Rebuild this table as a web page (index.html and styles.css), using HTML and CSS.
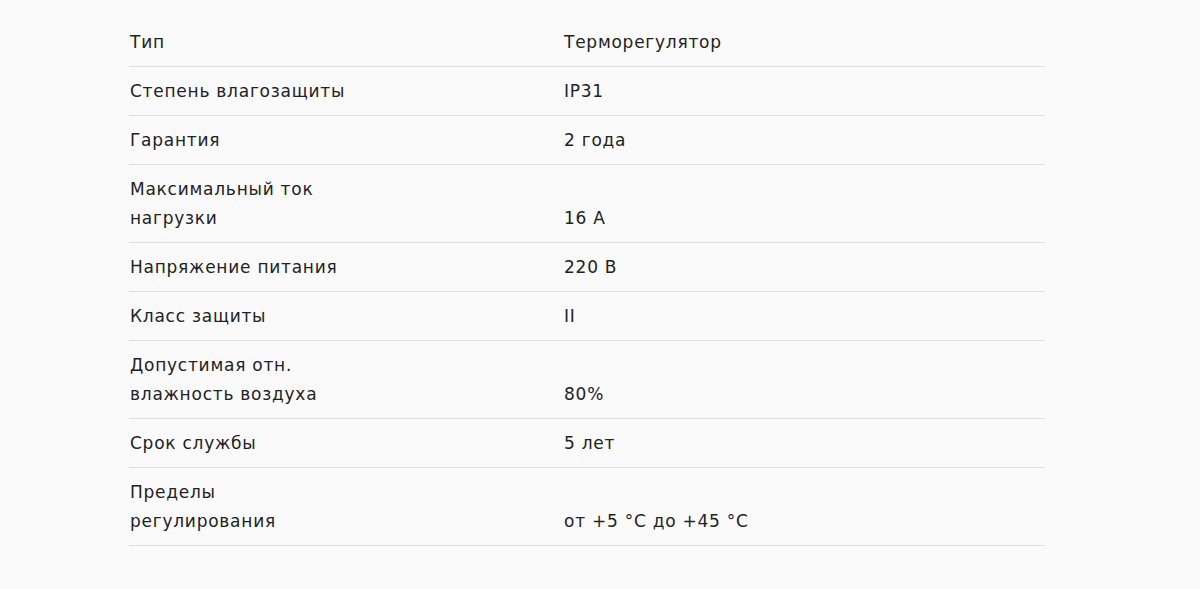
FILE: index.html
```html
<!DOCTYPE html>
<html lang="ru">
<head>
<meta charset="utf-8">
<link rel="stylesheet" href="styles.css">
</head>
<body>
<table class="specs">
  <tr class="row first"><td class="label"><span class="label-text">Тип</span></td><td class="value">Терморегулятор</td></tr>
  <tr class="row"><td class="label"><span class="label-text">Степень влагозащиты</span></td><td class="value">IP31</td></tr>
  <tr class="row"><td class="label"><span class="label-text">Гарантия</span></td><td class="value">2 года</td></tr>
  <tr class="row"><td class="label"><span class="label-text">Максимальный ток нагрузки</span></td><td class="value">16 А</td></tr>
  <tr class="row"><td class="label"><span class="label-text">Напряжение питания</span></td><td class="value">220 В</td></tr>
  <tr class="row"><td class="label"><span class="label-text">Класс защиты</span></td><td class="value">II</td></tr>
  <tr class="row"><td class="label"><span class="label-text">Допустимая отн. влажность воздуха</span></td><td class="value">80%</td></tr>
  <tr class="row"><td class="label"><span class="label-text">Срок службы</span></td><td class="value">5 лет</td></tr>
  <tr class="row"><td class="label"><span class="label-text">Пределы регулирования</span></td><td class="value">от +5 °C до +45 °C</td></tr>
</table>
</body>
</html>
```
FILE: styles.css
```css
html, body {
  margin: 0;
  padding: 0;
  background: #fafafa;
}
body {
  font-family: "DejaVu Sans", "Open Sans", sans-serif;
  font-size: 17px;
  letter-spacing: 0.75px;
  color: #222;
}
.specs {
  width: 916px;
  margin: 18px 0 0 129px;
  border-collapse: collapse;
}
.row td {
  padding: 10px 0 9px 1px;
  line-height: 29px;
  border-bottom: 1px solid #dedede;
  vertical-align: bottom;
}
.label {
  width: 433px;
}
.label-text {
  display: block;
  max-width: 228px;
}
```
